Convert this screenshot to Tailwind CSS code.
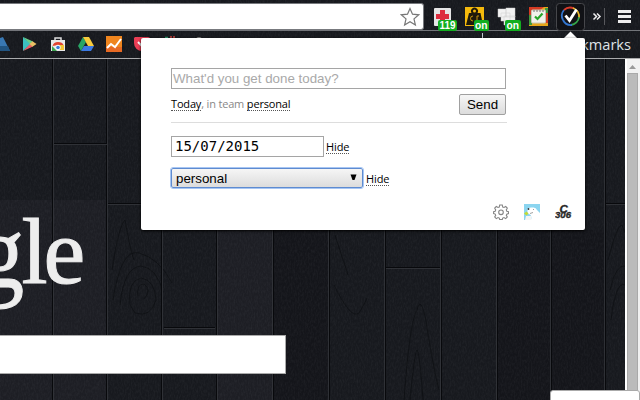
<!DOCTYPE html>
<html lang="en">
<head>
<meta charset="utf-8">
<title>Status popup</title>
<script src="https://cdn.jsdelivr.net/npm/@tailwindcss/browser@4"></script>
</head>
<body class="bg-[#191b20]">
<div class="relative flex h-[400px] w-[640px] flex-col overflow-hidden bg-[#191b20] font-['Noto_Sans',sans-serif]">

  <!-- wooden backdrop -->
  <svg class="absolute inset-0" width="640" height="400" viewBox="0 0 640 400">
    <defs>
      <filter id="grain" x="0" y="0" width="100%" height="100%">
        <feTurbulence type="fractalNoise" baseFrequency="0.7 0.3" numOctaves="3" seed="4"/>
        <feColorMatrix values="0 0 0 0 0.5  0 0 0 0 0.52  0 0 0 0 0.56  0.5 0 0 0 -0.17"/>
      </filter>
    </defs>
    <rect width="640" height="400" fill="#17191e"/>
    <path fill="#1d1e24" d="M0 200h107v200H0zM217 230h56v170h-56z"/>
    <path fill="#14151a" d="M274 230h55v170h-55zM497 230h54v170h-54zM552 230h54v170h-54z"/>
    <rect width="640" height="400" filter="url(#grain)" opacity=".22"/>
    <g fill="none" stroke="#08090c" stroke-width="1" opacity=".5">
      <path d="M112 270q7-45 13-50q5 30 9 40M113 300q8-52 26-47q20 5 33 30M120 305q4-38 21-39q16 2 22 26M130 305q-3-24 11-27q14 2 15 22q-5 18-21 13zM138 296q-2-12 6-12q8 6 0 15M404 400q6-80 13-90q5-20 12 30q5 30 10 50M410 400q5-50 7-50q3 5 6 50M335 235l13 40M334 285q17 35 25 28q6-10 8-15M608 260q9-35 14-35l4 10M610 290q6-26 15-24M611 320q5-40 14-35"/>
    </g>
    <path stroke="#08090c" stroke-width="1" d="M52.500 59v341M106.500 59v341M161.500 230v170M216.500 230v170M273.500 230v170M329.500 230v170M385.500 230v170M441.500 230v170M497.500 230v170M551.500 230v170M605.500 59v341M54 143.500h53M108 203.500h33M164 327.500h51M386 267.500h55M606 203.500h20"/>
    <path stroke="#33353a" d="M53.500 59v341M107.500 59v341M162.500 230v170M217.500 230v170M272.500 230v170M328.500 230v170M384.500 230v170M440.500 230v170M496.500 230v170M550.500 230v170M604.500 59v341M54 144.500h53M108 204.500h33M164 328.500h51M386 268.500h55M606 204.500h20" opacity=".85"/>
    <g font-family="'Liberation Serif',serif" font-size="94" fill="#ededed" stroke="#ededed" stroke-width="1">
      <text transform="translate(-23 287) scale(1 1.100)">g</text>
      <text x="21.500 43.500" y="282.500">le</text>
    </g>
  </svg>

  <!-- browser toolbar -->
  <header class="relative flex h-[31px] shrink-0 items-start border-b border-[#73757a]">
    <div class="mt-[3px] flex h-[27px] w-[424px] shrink-0 items-center justify-end rounded-r-[3px] border-y border-r border-[#77797d] bg-white pr-[3px]">
      <svg width="20" height="20" viewBox="0 0 20 20" fill="#fff" stroke="#777" stroke-width="1.200"><path d="M10 1.500l2.500 5.700 6.200.6-4.700 4.100 1.400 6.100-5.400-3.200L4.600 18 6 11.900 1.300 7.800l6.200-.6z"/></svg>
    </div>
    <svg class="shrink-0" width="216" height="31" viewBox="424 0 216 31" font-family="'Liberation Sans',sans-serif" font-size="10.500" font-weight="700" fill="#fff">
      <rect x="434" y="8" width="17" height="18" rx="1" fill="#e5e5e5"/>
      <path fill="#dd2c3e" d="M440 10h5v4h4v5h-4v4h-5v-4h-4v-5h4z"/>
      <rect x="438" y="20" width="19" height="11" rx="2" fill="#12ae20"/>
      <text x="439.500" y="29" textLength="16" lengthAdjust="spacingAndGlyphs">119</text>
      <path fill="#f5b90c" d="M465 7h19v19h-19z"/>
      <path fill="#1f1a0a" d="M469 13h2.500a3.500 3.500 0 1 1 6 0h3l2.500 12h-17z"/>
      <circle cx="474.500" cy="11" r="1.500" fill="#f5b90c"/>
      <path fill="none" stroke="#c9950c" d="M473 16a2 2 0 1 0 0 5M479 16h-2v6"/>
      <rect x="474" y="20" width="15" height="11" rx="2" fill="#12ae20"/>
      <text x="475" y="28.700" textLength="12.500" lengthAdjust="spacingAndGlyphs">on</text>
      <path fill="#f2f2f2" stroke="#ccc" stroke-width=".5" d="M498 9h8v8h-8zM506 8h9v9h-9zM501 13h9v8h-9zM504 16h11v9h-11z"/>
      <rect x="505" y="20" width="16" height="11" rx="2" fill="#12ae20"/>
      <text x="506.500" y="28.700" textLength="12.500" lengthAdjust="spacingAndGlyphs">on</text>
      <path fill="#e6a51a" d="M529 7h19v19h-19z"/>
      <path fill="#d53a22" d="M529 7h15l-4 3h-8v12l-3 3zM545 13h3v10h-3z"/>
      <path fill="#3e9a3a" d="M529 15h3v10h-3zM545 8h3v5h-3z"/>
      <rect x="531.500" y="10" width="14" height="13" rx="1" fill="#f1f1eb" stroke="#c6c6b5"/>
      <path d="M534 10v2M537 10v2M540 10v2M543 10v2" stroke="#777"/>
      <path fill="none" stroke="#28a52b" stroke-width="2.200" d="M535 16.500l2.500 2.500 5-5.500"/>
      <rect x="556.500" y="3.500" width="28" height="27" rx="3" fill="#111216" stroke="#46474b"/>
      <g fill="none" stroke-width="1.800">
        <path stroke="#3275ce" d="M564 10a9 9 0 0 0-1 10"/>
        <path stroke="#d93b2b" d="M564 10a9 9 0 0 1 10-1.500"/>
        <path stroke="#e8b62c" d="M573 8a9 9 0 0 1 6 10"/>
        <path stroke="#35a64a" d="M579 17a9 9 0 0 1-8 8"/>
        <path stroke="#3275ce" d="M572 25a9 9 0 0 1-9-5"/>
      </g>
      <path fill="none" stroke="#fff" stroke-width="2.800" d="M565.500 15.500l4 5 7-11"/>
      <path fill="none" stroke="#eee" stroke-width="1.500" d="M593.500 13.500l3 3-3 3M597 13.500l3 3-3 3"/>
      <path stroke="#57585c" d="M604.500 8v17"/>
      <path stroke="#eee" stroke-width="3" d="M618 11.500h13M618 16.500h13M618 21.500h13"/>
    </svg>
  </header>

  <!-- bookmarks bar -->
  <nav class="relative flex h-[28px] shrink-0 items-center justify-between border-b border-[#aaabad]">
    <svg width="205" height="27" viewBox="0 31 205 27">
      <path fill="#3978b3" d="M0 38l3-1 7 14H0z"/><path fill="#225582" d="M0 46h8l2 5H0z"/>
      <path fill="#3cc0bf" d="M23 37l8 7-8 7z"/><path fill="#69ce87" d="M23 37l10 4.500-3 2.500z"/><path fill="#e95f66" d="M23 51l7-7 3 2.500z"/><path fill="#eac064" d="M32.500 41.200l4 2.800-4 2.800-3-2.800z"/>
      <path fill="none" stroke="#ddd" stroke-width="1.500" d="M55 40v-2h6v2"/>
      <path fill="#e9e9e9" d="M51 40h14v11H51z"/>
      <path fill="#e14331" d="M52.500 46q1-4 5.500-4t5.500 3h-5z"/><path fill="#3da551" d="M52 46l5 5h-5z"/><path fill="#f1c332" d="M59 45h5v5h-4z"/><circle cx="58" cy="47.500" r="2.300" fill="#3c7edb" stroke="#fff"/>
      <path fill="#28a565" d="M83 37l3 5-5 9-3-5z"/><path fill="#f7cb3d" d="M83 37h6l5 9h-6z"/><path fill="#3b79e2" d="M84 46h10l-3 5H81z"/>
      <path fill="#ef851e" d="M106 36h16v16h-16z"/><path fill="#e66923" d="M106 47h16v5h-16z"/><path fill="none" stroke="#fff" stroke-width="2" d="M107 48l4-4 4 3 6-8"/>
      <path fill="#ec3e55" d="M135 37h13q2 0 2 2v4a8 8 0 0 1-16 0v-5z"/><path fill="none" stroke="#fff" stroke-width="2" d="M138 42l4 4 4-4"/>
      <path stroke="#29966c" stroke-width="1.500" d="M165 37.500h3"/><path stroke="#d0443e" stroke-width="1.500" d="M171 36v2M174 36v2"/><circle cx="199" cy="40.500" r="3.500" fill="#888"/>
    </svg>
    <span class="mr-[9px] whitespace-nowrap text-[14.600px] leading-[20px] text-[#dfe3e7] font-['Open_Sans','Noto_Sans',sans-serif] relative -top-px">Other bookmarks</span>
  </nav>
  <div class="absolute left-[482px] top-[33px] h-[5px] w-px bg-[#c0c8d0]"></div>

  <!-- page -->
  <main class="relative flex flex-1 justify-between">
    <div class="mt-[276px] h-[39px] w-[286px] border-y border-r border-[#aaa] bg-white"></div>
    <div class="flex w-[15px] flex-col items-center border-l-2 border-white bg-[#f1f1f1]">
      <svg class="shrink-0" width="13" height="14" viewBox="0 0 13 14"><path fill="#999" d="M2 10l3.500-4L9 10z"/></svg>
      <div class="w-[11px] flex-1 self-start border border-[#a9a9a9] bg-[#bbb]"></div>
    </div>
  </main>

  <div class="absolute left-[550px] top-[390px] h-[14px] w-[90px] rounded-t-[3px] border border-[#aaa] bg-white"></div>

  <!-- extension popup -->
  <svg class="absolute left-[563px] top-[31px]" width="15" height="8" viewBox="0 0 15 8"><path fill="#fff" d="M7.500.5L15 8H0z"/></svg>
  <section class="absolute left-[141px] top-[38px] flex h-[192px] w-[444px] flex-col rounded-[2px] bg-white pl-[30px] pt-[30px] text-[11px] leading-[13px] text-black shadow-[0_1px_3px_#000] font-['Open_Sans','Noto_Sans',sans-serif]">
    <div class="flex h-[21px] w-[335px] shrink-0 items-center border border-[#a5a5a5] pl-[1px] text-[13.330px] text-[#a9a9a9] font-['Liberation_Sans',sans-serif]">What'd you get done today?</div>
    <div class="mt-[5px] flex h-[21px] w-[335px] shrink-0 items-center justify-between">
      <p class="-mt-px flex whitespace-pre tracking-[-0.170px] text-[#888]"><span class="border-b border-dotted border-[#555] text-black">Today</span>, in team <span class="border-b border-dotted border-[#555] text-black">personal</span></p>
      <div class="flex h-[21px] w-[47px] items-center justify-center rounded-[2px] border border-[#a0a0a0] bg-linear-to-b from-[#f6f6f6] to-[#dcdcdc] text-[13.330px] font-['Liberation_Sans',sans-serif]">Send</div>
    </div>
    <div class="mt-[7px] h-px w-[336px] shrink-0 bg-[#ddd]"></div>
    <div class="mt-[13px] flex h-[21px] shrink-0 items-center gap-[2px]">
      <div class="flex h-[21px] w-[153px] items-center border border-[#a5a5a5] pl-[3px] text-[14px] font-['DejaVu_Sans_Mono',monospace]">15/07/2015</div>
      <span class="mt-px border-b border-dotted border-[#555] tracking-[-0.100px]">Hide</span>
    </div>
    <div class="mt-[11px] flex h-[20px] shrink-0 items-center gap-[3px]">
      <div class="flex h-[20px] w-[192px] items-center justify-between rounded-[2px] border border-[#5e8bd0] bg-linear-to-b from-[#f6f6f6] to-[#dcdcdc] pl-[4px] pr-[5px] text-[13.330px] outline outline-[#a7c6f3] font-['Liberation_Sans',sans-serif]">personal
        <svg class="-mt-px" width="7" height="7" viewBox="0 0 7 7"><path d="M.5.500h6L4.500 6h-2z"/></svg>
      </div>
      <span class="mt-px border-b border-dotted border-[#555] tracking-[-0.100px]">Hide</span>
    </div>
    <div class="mt-[16px] flex shrink-0 items-center justify-end gap-[15px] pr-[13px]">
      <svg width="16" height="16" viewBox="0 0 16 16" fill="none" stroke="#858585" stroke-width="1.100"><path d="M6.700 1h2.600l.4 2 1.300.5L12.700 2.500l1.600 1.700-1 1.700.5 1.300 1.700.4v2l-1.700.5-.5 1.300 1 1.600-1.600 1.600-1.700-1-1.300.5-.4 1.500H6.700l-.4-1.500-1.300-.5-1.700 1-1.600-1.600 1-1.600-.5-1.300L.6 9.600v-2l1.600-.4.5-1.300-1-1.700 1.600-1.700L5 3.500 6.300 3z"/><circle cx="8" cy="8.300" r="2.300"/></svg>
      <svg width="16" height="16" viewBox="0 0 16 16"><path fill="#8bd5f0" d="M0 0h16v16H0z"/><path fill="#fff" d="M4 4.500q2-1.500 4.500-1 3.500-.5 4.500 2.500l3 3v7H7q1-4-1-5.500-3-.5-2.500-4z"/><path fill="#f4f4f4" d="M2 12h5v4H1z"/><path fill="#c3db34" d="M0 9.500l2.500-2 2 2-2 2z"/><circle cx="4.500" cy="5" r=".9" fill="#333"/><path stroke="#777" stroke-width=".7" d="M9 5.500h1M6 9.500l3-1"/></svg>
      <svg width="17" height="16" viewBox="0 0 17 16" font-family="'Liberation Sans',sans-serif" font-weight="700" font-style="italic" fill="#222" stroke="#333" stroke-width=".4"><text x="4.500" y="8.500" font-size="11.500">C</text><text x="0" y="14.300" font-size="9.500" textLength="16" lengthAdjust="spacingAndGlyphs">306</text></svg>
    </div>
  </section>
</div>
</body>
</html>
